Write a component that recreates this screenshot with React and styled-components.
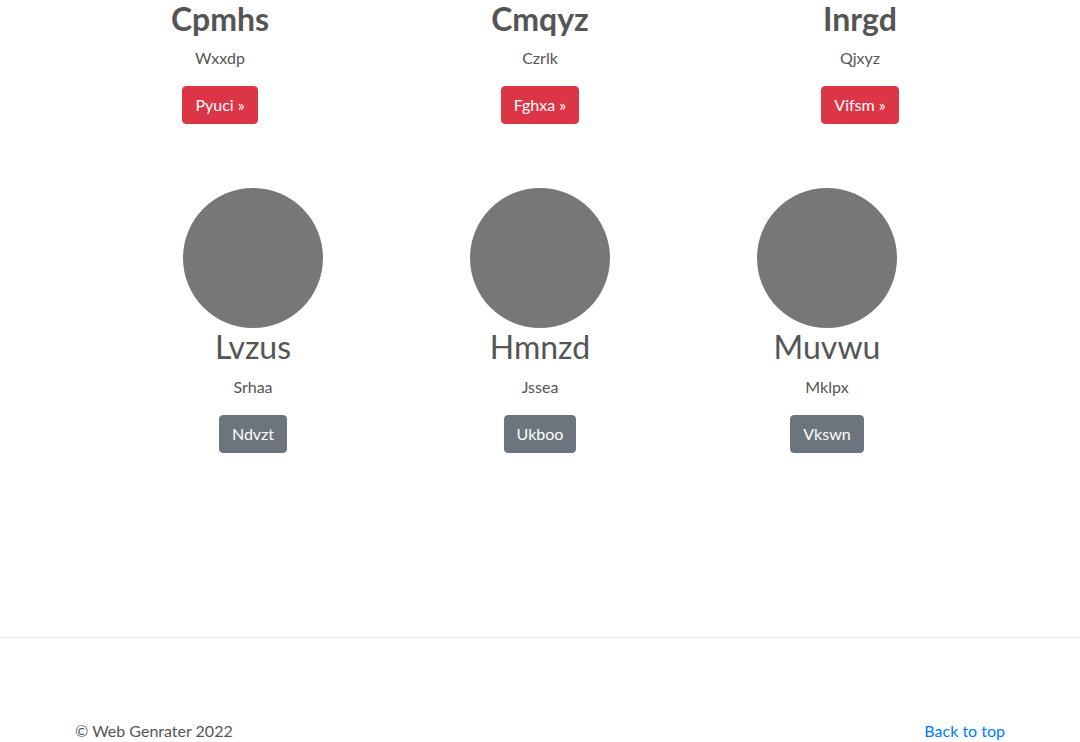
import React from 'react';
import styled, { createGlobalStyle } from 'styled-components';

const GlobalStyle = createGlobalStyle`
    * { box-sizing: border-box; }
    body {
        margin: 0;
        font-family: "Lato", "Noto Sans", sans-serif;
        font-size: 16px;
        line-height: 1.5;
        color: #555;
        background: #fff;
    }
`

const Container = styled.div`
    width: 960px;
    margin: 0 auto;
    padding: 0 15px;
`

const Row = styled.div`
    display: grid;
    grid-template-columns: repeat(3, 1fr);
    width: ${(props) => props.width || 'auto'};
    margin: ${(props) => props.width ? '0 auto' : '0 -15px'};
`

const Col = styled.div`
    display: flex;
    flex-direction: column;
    align-items: center;
    text-align: center;
    margin-bottom: 24px;
`

const Heading = styled.h2`
    margin: 0 0 8px;
    font-size: 32px;
    line-height: 1.2;
    font-weight: ${(props) => props.weight || 700};
    color: #555;
`

const Text = styled.p`
    margin: 0 12px 16px;
    color: #555;
`

const Button = styled.a`
    display: inline-block;
    padding: 6px 12px;
    font-size: 16px;
    line-height: 1.5;
    border: 1px solid ${(props) => props.bg || '#dc3545'};
    border-radius: 4px;
    color: #fff;
    background: ${(props) => props.bg || '#dc3545'};
    text-decoration: none;
    cursor: pointer;
`

const Avatar = styled.div`
    width: 140px;
    height: 140px;
    border-radius: 50%;
    background: #777;
`

const Spacer = styled.div`
    height: ${(props) => props.h}px;
`

const Divider = styled.hr`
    margin: 0;
    border: 0;
    border-top: 1px solid #e5e5e5;
`

const Footer = styled.footer`
    display: flex;
    justify-content: space-between;
    padding: 81px 0 0;
    p {
        margin: 0;
    }
    a {
        color: #007bff;
        text-decoration: none;
    }
`

const features = [
    {title: 'Cpmhs', text: 'Wxxdp', btn: 'Pyuci'},
    {title: 'Cmqyz', text: 'Czrlk', btn: 'Fghxa'},
    {title: 'Inrgd', text: 'Qjxyz', btn: 'Vifsm'},
];

const people = [
    {title: 'Lvzus', text: 'Srhaa', btn: 'Ndvzt'},
    {title: 'Hmnzd', text: 'Jssea', btn: 'Ukboo'},
    {title: 'Muvwu', text: 'Mklpx', btn: 'Vkswn'},
];

export default function App() {
    return (
        <>
            <GlobalStyle/>
            <Container>
                <Row>
                    {features.map(item => (
                        <Col key={item.title}>
                            <Heading>{item.title}</Heading>
                            <Text>{item.text}</Text>
                            <Button>{item.btn} &raquo;</Button>
                        </Col>
                    ))}
                </Row>
                <Spacer h={40}/>
                <Row width="861px">
                    {people.map(item => (
                        <Col key={item.title}>
                            <Avatar/>
                            <Heading weight={400}>{item.title}</Heading>
                            <Text>{item.text}</Text>
                            <Button bg="#6c757d">{item.btn}</Button>
                        </Col>
                    ))}
                </Row>
                <Spacer h={160}/>
            </Container>
            <Divider/>
            <Container>
                <Footer>
                    <p>&copy; Web Genrater 2022</p>
                    <a href="#top">Back to top</a>
                </Footer>
            </Container>
        </>
    )
}
